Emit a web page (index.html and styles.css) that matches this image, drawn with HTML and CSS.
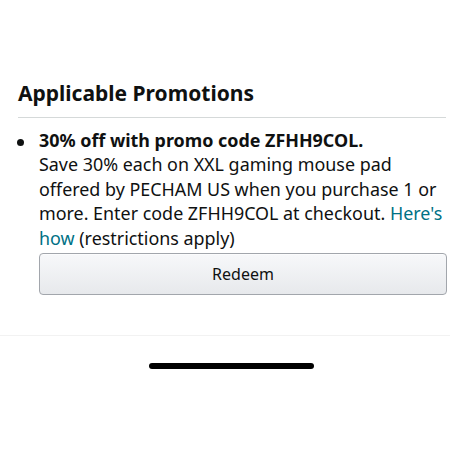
FILE: index.html
```html
<!DOCTYPE html>
<html>
<head>
<meta charset="utf-8">
<link rel="stylesheet" href="styles.css">
</head>
<body>
<div class="page">
  <section class="promos">
    <h2 class="title">Applicable Promotions</h2>
    <hr class="divider">
    <ul class="list">
      <li class="item">
        <div class="head">30% off with promo code ZFHH9COL.</div>
        <div class="desc">Save 30% each on XXL gaming mouse pad offered by PECHAM US when you purchase 1 or more. Enter code ZFHH9COL at checkout. <a class="link" href="#">Here's</a> <a class="link" href="#">how</a> (restrictions apply)</div>
        <button class="btn">Redeem</button>
      </li>
    </ul>
  </section>
  <div class="bottom">
    <div class="home"></div>
  </div>
</div>
</body>
</html>
```
FILE: styles.css
```css
html, body {
  margin: 0;
  padding: 0;
  background: #fff;
}
body {
  font-family: "Noto Sans", "Open Sans", sans-serif;
  color: #0f1111;
  width: 450px;
  height: 450px;
  overflow: hidden;
}
.promos {
  padding: 79px 4px 0 18px;
  height: 336px;
  box-sizing: border-box;
  border-bottom: 1px solid #f2f2f2;
}
.title {
  margin: 0;
  font-size: 21px;
  line-height: 29px;
  font-weight: 700;
}
.divider {
  margin: 9px 0 0 0;
  border: 0;
  border-top: 1px solid #d5d9d9;
}
.list {
  list-style: none;
  margin: 0;
  padding: 0;
}
.item {
  position: relative;
  padding-left: 21px;
  margin-top: 10px;
  font-size: 17.9px;
  line-height: 24.4px;
}
.item::before {
  content: "";
  position: absolute;
  left: -1px;
  top: 10.5px;
  width: 7px;
  height: 7px;
  border-radius: 50%;
  background: #0f1111;
}
.head {
  font-weight: 700;
}
.link {
  color: #007185;
  text-decoration: none;
}
.btn {
  display: block;
  width: 408px;
  height: 42px;
  margin-top: 3px;
  border: 1px solid #a2a6ac;
  border-radius: 4px;
  background: linear-gradient(#f7f8fa, #e7e9ec);
  font-family: inherit;
  font-size: 16px;
  color: #0f1111;
  box-shadow: inset 0 1px 0 rgba(255,255,255,.6);
  padding: 0;
}
.bottom {
  padding-top: 27px;
}
.home {
  width: 165px;
  height: 6px;
  margin-left: 149px;
  border-radius: 3px;
  background: #000;
}
```
